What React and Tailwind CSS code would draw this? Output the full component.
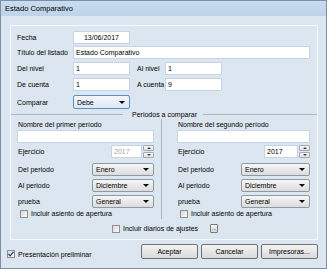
import React from "react";

function Box({ className = "", children, center, dim }) {
  return (
    <div
      className={`h-[13px] bg-white border border-[#c5d5e6] flex items-center ${
        center ? "justify-center" : "pl-[2px]"
      } ${dim ? "text-[#a3a3a3]" : ""} ${className}`}
    >
      {children}
    </div>
  );
}

function Select({ className = "", value, focus }) {
  return (
    <div
      className={`h-[13px] rounded-[2px] border flex items-center justify-between pl-[3px] pr-[4px] ${
        focus
          ? "border-[#5b90c4] bg-linear-to-b from-[#f2f7fc] to-[#dde9f5]"
          : "border-[#8e99a6] bg-linear-to-b from-[#f6f6f6] to-[#dcdcdc]"
      } ${className}`}
    >
      <span>{value}</span>
      <span className="w-0 h-0 border-l-[3px] border-r-[3px] border-t-[3px] border-l-transparent border-r-transparent border-t-black" />
    </div>
  );
}

function Spin({ className = "", dim }) {
  return (
    <div className={`h-[13px] flex ${className}`}>
      <Box className="flex-1" dim={dim}>2017</Box>
      <div className="w-[11px] ml-[1px] flex flex-col gap-px">
        <div className="flex-1 border border-[#a3abb5] rounded-[1px] bg-linear-to-b from-[#f7f7f7] to-[#e2e2e2] flex items-center justify-center">
          <span className="w-0 h-0 border-l-[2px] border-r-[2px] border-b-[2px] border-l-transparent border-r-transparent border-b-[#444]" />
        </div>
        <div className="flex-1 border border-[#a3abb5] rounded-[1px] bg-linear-to-b from-[#f7f7f7] to-[#e2e2e2] flex items-center justify-center">
          <span className="w-0 h-0 border-l-[2px] border-r-[2px] border-t-[2px] border-l-transparent border-r-transparent border-t-[#444]" />
        </div>
      </div>
    </div>
  );
}

function Check({ checked }) {
  return (
    <div className="w-[8px] h-[8px] shrink-0 border border-[#8e8f8f] bg-linear-to-br from-[#d8d8d8] to-[#fbfbfb] flex items-center justify-center">
      {checked && (
        <svg width="6" height="6" viewBox="0 0 6 6">
          <polyline points="0.5,3 2.2,4.8 5.5,0.8" fill="none" stroke="#2b4377" strokeWidth="1.3" />
        </svg>
      )}
    </div>
  );
}

function Btn({ children }) {
  return (
    <div className="w-[57px] h-[15px] rounded-[2px] border border-[#707070] bg-linear-to-b from-[#f4f4f4] to-[#d9d9d9] flex items-center justify-center">
      {children}
    </div>
  );
}

function Row({ label, children, className = "" }) {
  return (
    <div className={`flex items-center h-[13px] ${className}`}>
      <div className="w-[56px]">{label}</div>
      {children}
    </div>
  );
}

function PeriodRows({ selW, spinW, dim }) {
  return (
    <>
      <div className="mt-[2px] h-[13px] flex items-center justify-between pl-[1px]">
        <span>Ejercicio</span>
        <Spin className={spinW} dim={dim} />
      </div>
      <div className="mt-[5px] h-[13px] flex items-center justify-between pl-[1px]">
        <span>Del periodo</span>
        <Select className={selW} value="Enero" />
      </div>
      <div className="mt-[3px] h-[13px] flex items-center justify-between pl-[1px]">
        <span>Al periodo</span>
        <Select className={selW} value="Diciembre" />
      </div>
      <div className="mt-[3px] h-[13px] flex items-center justify-between pl-[1px]">
        <span>prueba</span>
        <Select className={selW} value="General" />
      </div>
      <div className="mt-[1px] h-[9px] flex items-center gap-[3px] pl-[3px]">
        <Check />
        <span>Incluir asiento de apertura</span>
      </div>
    </>
  );
}

export default function App() {
  return (
    <div className="w-[327px] h-[269px] bg-[#dce6f1] border border-[#7d8fa4] flex flex-col overflow-hidden font-['Liberation_Sans',Arial,sans-serif] text-[7px] leading-none text-black">
      <div className="h-[15px] shrink-0 bg-linear-to-b from-[#cadcef] to-[#bed3e9] flex items-center pl-[4px] text-[7.5px]">
        Estado Comparativo
      </div>

      <div className="ml-[9px] mt-[9px] w-[308px] h-[215px] border border-[#f4f8fc] flex flex-col">
        <div className="pl-[6px]">
          <Row label="Fecha" className="mt-[5px]">
            <Box className="w-[57px]" center>13/06/2017</Box>
          </Row>
          <Row label="Título del listado" className="mt-[2px]">
            <Box className="w-[237px]">Estado Comparativo</Box>
          </Row>
          <Row label="Del nivel" className="mt-[3px]">
            <Box className="w-[57px]">1</Box>
            <div className="w-[35px] pl-[7px]">Al nivel</div>
            <Box className="w-[57px]">1</Box>
          </Row>
          <Row label="De cuenta" className="mt-[3px]">
            <Box className="w-[57px]">1</Box>
            <div className="w-[35px] pl-[7px]">A cuenta</div>
            <Box className="w-[57px]">9</Box>
          </Row>
          <div className="mt-[4px] h-[14px] flex items-center">
            <div className="w-[56px]">Comparar</div>
            <Select className="w-[57px] h-[14px]" value="Debe" focus />
          </div>
        </div>

        <div className="mt-[1px] h-[9px] flex items-center">
          <div className="w-[112px] h-px bg-[#aab6c3]" />
          <span className="ml-[9px] mr-[6px]">Periodos a comparar</span>
          <div className="flex-1 h-px bg-[#aab6c3]" />
        </div>

        <div className="flex h-[100px]">
          <div className="w-[151px] border-r border-[#aab6c3] pl-[6px] pr-[7px] flex flex-col">
            <div className="mt-[1px] h-[8px] flex items-center pl-[1px]">Nombre del primer período</div>
            <Box className="mt-[2px] w-full" />
            <PeriodRows selW="w-[62px]" spinW="w-[43px]" dim />
          </div>
          <div className="flex-1 pl-[15px] pr-[7px] flex flex-col">
            <div className="mt-[1px] h-[8px] flex items-center pl-[1px]">Nombre del segundo período</div>
            <Box className="mt-[2px] w-full" />
            <PeriodRows selW="w-[69px]" spinW="w-[46px]" />
          </div>
        </div>

        <div className="mt-[5px] h-[9px] flex items-center pl-[101px]">
          <Check />
          <span className="ml-[3px]">Incluir diarios de ajustes</span>
          <div className="ml-[12px] w-[8px] h-[9px] border border-[#7a7a7a] rounded-[1px] bg-linear-to-b from-[#f4f4f4] to-[#dadada] flex items-end justify-center text-[5px] pb-[1px]">
            ...
          </div>
        </div>
      </div>

      <div className="mt-[4px] flex items-start">
        <div className="ml-[6px] mt-[6px] flex items-center gap-[3px]">
          <Check checked />
          <span>Presentación preliminar</span>
        </div>
        <div className="ml-auto mr-[8px] flex gap-[3px]">
          <Btn>Aceptar</Btn>
          <Btn>Cancelar</Btn>
          <Btn>Impresoras...</Btn>
        </div>
      </div>
    </div>
  );
}
